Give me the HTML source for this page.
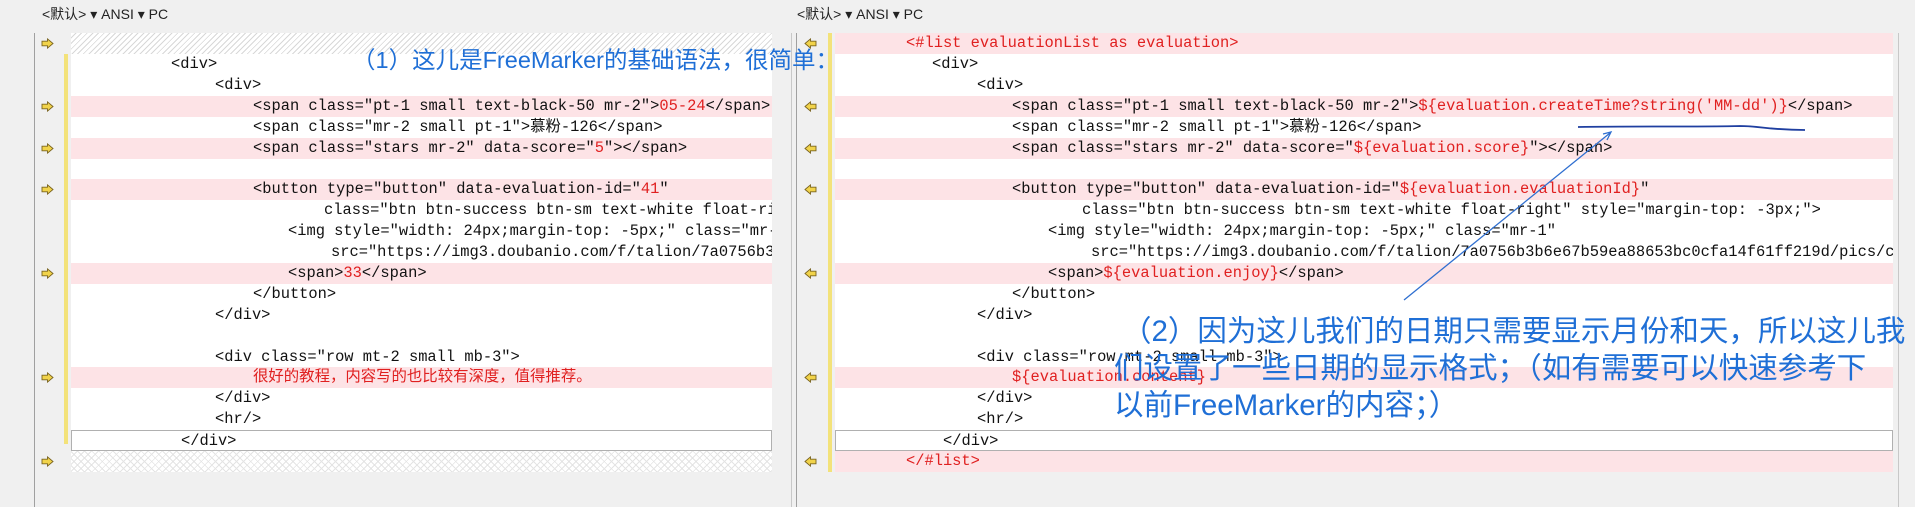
<!DOCTYPE html>
<html><head><meta charset="utf-8"><style>
body{margin:0;width:1915px;height:507px;background:#f0f0f0;position:relative;overflow:hidden;font-family:"Liberation Mono","Noto Sans CJK SC",monospace;}
.hdr{position:absolute;top:4px;font:14px "Liberation Sans","Noto Sans CJK SC",sans-serif;color:#222;}
.pane{position:absolute;top:33px;height:474px;background:#f0f0f0;border-left:1px solid #a0a0a0;}
.row{position:absolute;height:21px;line-height:21px;font-size:15.4px;color:#111;white-space:pre;}
.pk{background:#fde3e6;}
.r{color:#e02020;}
.hatch{background:repeating-linear-gradient(135deg,#fff 0 3px,#d8d8d8 3px 4px);}
.cross{background:repeating-linear-gradient(45deg,transparent 0 4px,#e4e4e4 4px 5px),repeating-linear-gradient(135deg,#fff 0 4px,#e4e4e4 4px 5px);}
.bar{position:absolute;width:4px;background:#f3e27a;}
.ar{position:absolute;width:13px;height:11px;}
.t{position:absolute;left:0;}
.ann{position:absolute;color:#1f6fd6;font-family:"Liberation Sans","Noto Sans CJK SC",sans-serif;white-space:nowrap;}
</style></head><body>
<div class="hdr" style="left:42px">&lt;默认&gt; ▾ ANSI ▾ PC</div>
<div class="hdr" style="left:797px">&lt;默认&gt; ▾ ANSI ▾ PC</div>
<div class="pane" style="left:34px;width:738px"></div>
<div class="pane" style="left:796px;width:1097px"></div>
<div style="position:absolute;left:791px;top:33px;width:1px;height:474px;background:#c8c8c8"></div>
<div style="position:absolute;left:1898px;top:33px;width:1px;height:474px;background:#c8c8c8"></div>
<div style="position:absolute;left:71px;top:33px;width:701px;height:439px;background:#fff"></div>
<div style="position:absolute;left:835px;top:33px;width:1058px;height:439px;background:#fff"></div>
<div class="bar" style="left:64px;top:54px;height:390px"></div>
<div class="bar" style="left:828px;top:33px;height:439px"></div>
<svg width="0" height="0" style="position:absolute"><defs>
<symbol id="ra" viewBox="0 0 14 12"><path d="M1 3.5H7V1L13 6L7 11V8.5H1Z" fill="#f1d34a" stroke="#7a6420" stroke-width="1"/></symbol>
<symbol id="la" viewBox="0 0 14 12"><path d="M13 3.5H7V1L1 6L7 11V8.5H13Z" fill="#f1d34a" stroke="#7a6420" stroke-width="1"/></symbol>
</defs></svg>
<div id="L"></div><div id="R"></div>
<script>
var T0=33,RH=20.9;
function rowTop(i){return T0+i*RH;}
var LR=[
[0,'hatch',null,''],
[1,'',171,'&lt;div&gt;'],
[2,'',215,'&lt;div&gt;'],
[3,'pk',253,'&lt;span class="pt-1 small text-black-50 mr-2"&gt;<span class=r>05-24</span>&lt;/span&gt;'],
[4,'',253,'&lt;span class="mr-2 small pt-1"&gt;慕粉-126&lt;/span&gt;'],
[5,'pk',253,'&lt;span class="stars mr-2" data-score="<span class=r>5</span>"&gt;&lt;/span&gt;'],
[7,'pk',253,'&lt;button type="button" data-evaluation-id="<span class=r>41</span>"'],
[8,'',324,'class="btn btn-success btn-sm text-white float-right" style="margin-top: -3px;"&gt;'],
[9,'',288,'&lt;img style="width: 24px;margin-top: -5px;" class="mr-1"'],
[10,'',331,'src="https://img3.doubanio.com/f/talion/7a0756b3b6e67b59ea88653bc0cfa14f61ff219d/pics/card"'],
[11,'pk',288,'&lt;span&gt;<span class=r>33</span>&lt;/span&gt;'],
[12,'',253,'&lt;/button&gt;'],
[13,'',215,'&lt;/div&gt;'],
[15,'',215,'&lt;div class="row mt-2 small mb-3"&gt;'],
[16,'pk',253,'<span class=r>很好的教程，内容写的也比较有深度，值得推荐。</span>'],
[17,'',215,'&lt;/div&gt;'],
[18,'',215,'&lt;hr/&gt;'],
[19,'box',180,'&lt;/div&gt;'],
[20,'cross',null,'']];
var RR=[
[0,'pk',906,'<span class=r>&lt;#list evaluationList as evaluation&gt;</span>'],
[1,'',932,'&lt;div&gt;'],
[2,'',977,'&lt;div&gt;'],
[3,'pk',1012,'&lt;span class="pt-1 small text-black-50 mr-2"&gt;<span class=r>${evaluation.createTime?string(\'MM-dd\')}</span>&lt;/span&gt;'],
[4,'',1012,'&lt;span class="mr-2 small pt-1"&gt;慕粉-126&lt;/span&gt;'],
[5,'pk',1012,'&lt;span class="stars mr-2" data-score="<span class=r>${evaluation.score}</span>"&gt;&lt;/span&gt;'],
[7,'pk',1012,'&lt;button type="button" data-evaluation-id="<span class=r>${evaluation.evaluationId}</span>"'],
[8,'',1082,'class="btn btn-success btn-sm text-white float-right" style="margin-top: -3px;"&gt;'],
[9,'',1048,'&lt;img style="width: 24px;margin-top: -5px;" class="mr-1"'],
[10,'',1091,'src="https://img3.doubanio.com/f/talion/7a0756b3b6e67b59ea88653bc0cfa14f61ff219d/pics/card"'],
[11,'pk',1048,'&lt;span&gt;<span class=r>${evaluation.enjoy}</span>&lt;/span&gt;'],
[12,'',1012,'&lt;/button&gt;'],
[13,'',977,'&lt;/div&gt;'],
[15,'',977,'&lt;div class="row mt-2 small mb-3"&gt;'],
[16,'pk',1012,'<span class=r>${evaluation.content}</span>'],
[17,'',977,'&lt;/div&gt;'],
[18,'',977,'&lt;hr/&gt;'],
[19,'box',942,'&lt;/div&gt;'],
[20,'pk',906,'<span class=r>&lt;/#list&gt;</span>']];
var AR=[0,3,5,7,11,16,20];
function build(rows,x0,w,arx,sym){
 var h='';
 for(var k=0;k<rows.length;k++){
  var i=rows[k][0],c=rows[k][1],x=rows[k][2],txt=rows[k][3];
  var st='left:'+x0+'px;top:'+rowTop(i)+'px;width:'+w+'px;overflow:hidden;';
  var cls=c=='box'?'':c;
  if(c=='box')st+='box-sizing:border-box;border:1px solid #b0b0b0;';
  h+='<div class="row '+cls+'" style="'+st+'">'+(x!==null?'<span class="t" style="left:'+(x-x0)+'px">'+txt+'</span>':'')+'</div>';
 }
 for(var j=0;j<AR.length;j++)h+='<svg class="ar" style="left:'+arx+'px;top:'+(rowTop(AR[j])+5)+'px"><use href="#'+sym+'"/></svg>';
 return h;
}
document.getElementById('L').innerHTML=build(LR,71,701,41,'ra');
document.getElementById('R').innerHTML=build(RR,835,1058,804,'la');
</script>
<div class="ann" style="left:352px;top:41px;font-size:23.5px">（1）这儿是FreeMarker的基础语法，很简单：</div>
<div class="ann" style="left:1122px;top:313px;font-size:29.5px;line-height:37px">（2）因为这儿我们的日期只需要显示月份和天，所以这儿我<br><span style="margin-left:-8px">们设置了一些日期的显示格式；（如有需要可以快速参考下</span><br><span style="margin-left:-8px">以前FreeMarker的内容；）</span></div>
<svg style="position:absolute;left:0;top:0" width="1915" height="507">
<path d="M1404 300L1610 133" stroke="#2f6fd0" stroke-width="1.3" fill="none"/>
<path d="M1603 134L1611 132L1607 140" stroke="#2f6fd0" stroke-width="1.3" fill="none"/>
<path d="M1578 127C1640 126 1700 127 1740 126C1760 126 1770 130 1805 130" stroke="#1f3fa0" stroke-width="1.8" fill="none"/>
</svg>
</body></html>
